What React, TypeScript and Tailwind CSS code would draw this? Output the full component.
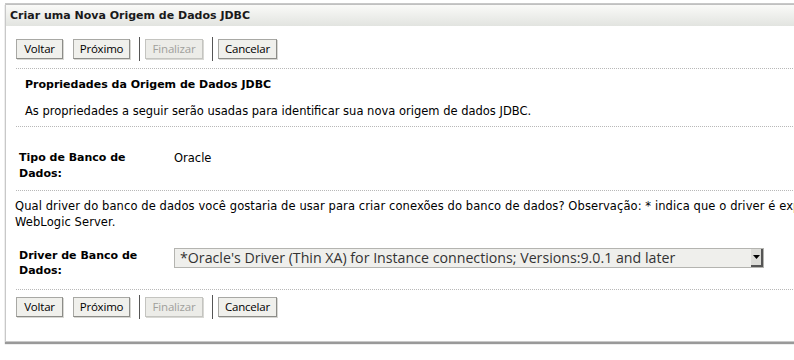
const ui = "font-['DejaVu_Sans',Verdana,sans-serif]";
const btnFont = "font-['Open_Sans','Noto_Sans',sans-serif]";

function Btn({ label, w, disabled }: { label: string; w: string; disabled?: boolean }) {
  return (
    <button
      className={`${btnFont} ${w} h-[20px] border text-center text-[11.5px] leading-[18px] tracking-[-0.2px] shadow-[1px_1px_0_#d8d8d4] ${
        disabled
          ? "border-[#c4c4c0] bg-[#ecece8] text-[#a0a09c]"
          : "border-[#a8a8a4] border-b-[#8c8c88] border-r-[#8c8c88] bg-[#f0f0ec] text-black"
      }`}
    >
      {label}
    </button>
  );
}

function ButtonBar() {
  return (
    <div className="flex items-center px-[10px]">
      <Btn label="Voltar" w="w-[47px]" />
      <div className="ml-[10px]">
        <Btn label="Próximo" w="w-[57px]" />
      </div>
      <div className="ml-[9px] mr-[5px] h-[24px] w-px bg-[#555]" />
      <Btn label="Finalizar" w="w-[58px]" disabled />
      <div className="ml-[9px] mr-[5px] h-[24px] w-px bg-[#555]" />
      <Btn label="Cancelar" w="w-[59px]" />
    </div>
  );
}

function Dotted() {
  return <div className="ml-[10px] border-t border-dotted border-[#b8b8b8]" />;
}

export default function App() {
  return (
    <div className={`${ui} h-[360px] w-[794px] overflow-hidden bg-white text-[11.5px] text-black`}>
      <div className="ml-[5px] mt-[3px] w-[1025px] border border-[#c8c8c8] bg-white shadow-[0_2px_1px_#999]">
        <div className="h-[22px] border-t border-[#c0c0c0] bg-gradient-to-b from-[#fafaf8] to-[#e2e4e0] px-[4px] text-[11px] font-bold leading-[22px] text-[#1a1a1a]">
          Criar uma Nova Origem de Dados JDBC
        </div>
        <div className="pt-[11px]">
          <ButtonBar />
        </div>
        <div className="mt-[7px]">
          <Dotted />
        </div>
        <div className="px-[19px] pt-[8px] text-[11px] font-bold leading-[16px]">
          Propriedades da Origem de Dados JDBC
        </div>
        <div className="px-[19px] pt-[10px] leading-[16px]">
          As propriedades a seguir serão usadas para identificar sua nova origem de dados JDBC.
        </div>
        <div className="mt-[7px]">
          <Dotted />
        </div>
        <div className="flex pl-[13px] pt-[23px] leading-[16px]">
          <div className="w-[155px] text-[11px] font-bold">
            Tipo de Banco de
            <br />
            Dados:
          </div>
          <div>Oracle</div>
        </div>
        <div className="mt-[8px]">
          <Dotted />
        </div>
        <div className="px-[9px] pt-[7px] leading-[16px] tracking-[0.09px]">
          Qual driver do banco de dados você gostaria de usar para criar conexões do banco de dados? Observação: * indica que o driver é explicitamente suportado pelo Oracle WebLogic Server.
        </div>
        <div className="flex pl-[13px] pt-[18px] leading-[15px]">
          <div className="w-[155px] text-[11px] font-bold">
            Driver de Banco de
            <br />
            Dados:
          </div>
          <div className="flex h-[20px] w-[590px] border border-[#b4b4b0] bg-[#efefec]">
            <div className={`${btnFont} flex-1 truncate pl-[5px] text-[14.2px] leading-[18px] text-[#333]`}>
              *Oracle's Driver (Thin XA) for Instance connections; Versions:9.0.1 and later
            </div>
            <div className="flex w-[12px] items-center justify-center border-b-2 border-r-2 border-[#555] bg-[#dcdcd8]">
              <svg width="7" height="4" viewBox="0 0 7 4">
                <path d="M0 0h7L3.5 4z" fill="#000" />
              </svg>
            </div>
          </div>
        </div>
        <div className="mt-[11px]">
          <Dotted />
        </div>
        <div className="pt-[5px]">
          <ButtonBar />
        </div>
        <div className="h-[22px]" />
      </div>
    </div>
  );
}
